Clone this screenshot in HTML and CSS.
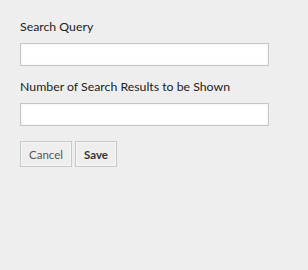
FILE: index.html
```html
<!DOCTYPE html>
<html lang="en">
<head>
    <meta charset="UTF-8">
    <meta name="viewport" content="width=device-width, initial-scale=1.0">
    <title>Search Settings</title>
    <link rel="stylesheet" href="styles.css">
</head>
<body>
    <form class="settings" id="searchSettings">
        <div class="field">
            <label for="query">Search Query</label>
            <input type="text" id="query" name="query">
        </div>
        <div class="field">
            <label for="count">Number of Search Results to be Shown</label>
            <input type="text" id="count" name="count">
        </div>
        <div class="actions">
            <button type="button" class="btn">Cancel</button>
            <button type="submit" class="btn btn-primary">Save</button>
        </div>
    </form>
</body>
</html>
```

FILE: styles.css
```css
html, body {
    height: 100%;
}
body {
    font-family: Lato, "Noto Sans", sans-serif;
    background-color: #eeeeee;
    margin: 0;
    padding: 18px 20px 0 20px;
    box-sizing: border-box;
    color: #333;
}
.settings {
    width: 249px;
}
.field {
    margin-bottom: 12px;
}
.field label {
    display: block;
    font-size: 12.3px;
    line-height: 18px;
    margin-bottom: 7px;
    color: #222;
}
.field input {
    display: block;
    width: 100%;
    height: 23px;
    box-sizing: border-box;
    margin: 0;
    padding: 2px 4px;
    background: #fff;
    border: 1px solid #c6c6c6;
    border-radius: 0;
    box-shadow: inset 0 0 3px rgba(0, 0, 0, 0.08);
    font-family: inherit;
    font-size: 13px;
    outline: none;
}
.actions {
    display: flex;
    gap: 3px;
    padding-top: 3px;
}
.btn {
    height: 26px;
    box-sizing: border-box;
    padding: 0 8px;
    background-color: #eeeeee;
    border: 1px solid #c8c8c8;
    box-shadow: inset 0 0 0 1px #f6f6f6;
    border-radius: 0;
    font-family: inherit;
    font-size: 11.5px;
    color: #555;
    cursor: pointer;
}
.btn-primary {
    font-weight: bold;
    color: #333;
}
```
